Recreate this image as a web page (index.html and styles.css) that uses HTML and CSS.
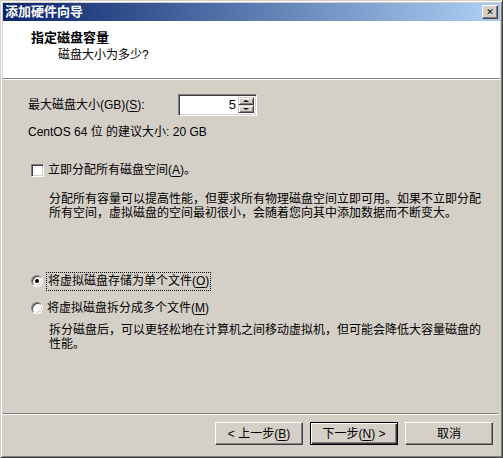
FILE: index.html
```html
<!DOCTYPE html>
<html lang="zh-CN">
<head>
    <meta charset="UTF-8">
    <title>添加硬件向导</title>
    <link rel="stylesheet" href="styles.css">
</head>
<body>
    <div class="window">
        <!-- Title bar -->
        <div class="titlebar">
            <span class="title">添加硬件向导</span>
            <span class="caption-btn">✕</span>
        </div>

        <!-- Header -->
        <div class="header">
            <div class="heading">指定磁盘容量</div>
            <div class="subheading">磁盘大小为多少?</div>
        </div>

        <!-- Body -->
        <div class="content">
            <div class="size-row">
                <label class="size-label" for="size">最大磁盘大小(GB)(<u>S</u>):</label>
                <div class="spinner">
                    <input id="size" class="spinner-input" type="text" value="5">
                    <div class="spin-buttons">
                        <span class="spin up"><i></i></span>
                        <span class="spin down"><i></i></span>
                    </div>
                </div>
            </div>
            <div class="hint">CentOS 64 位 的建议大小: 20 GB</div>

            <label class="option option-check">
                <span class="checkbox"></span>
                <span>立即分配所有磁盘空间(<u>A</u>)。</span>
            </label>
            <p class="desc desc-alloc">分配所有容量可以提高性能，但要求所有物理磁盘空间立即可用。如果不立即分配所有空间，虚拟磁盘的空间最初很小，会随着您向其中添加数据而不断变大。</p>

            <label class="option option-single">
                <span class="radio checked"></span>
                <span class="focus">将虚拟磁盘存储为单个文件(<u>O</u>)</span>
            </label>
            <label class="option option-split">
                <span class="radio"></span>
                <span>将虚拟磁盘拆分成多个文件(<u>M</u>)</span>
            </label>
            <p class="desc desc-split">拆分磁盘后，可以更轻松地在计算机之间移动虚拟机，但可能会降低大容量磁盘的性能。</p>
        </div>

        <!-- Footer -->
        <div class="footer">
            <button type="button" class="btn">&lt; 上一步(<u>B</u>)</button>
            <button type="button" class="btn btn-default">下一步(<u>N</u>) &gt;</button>
            <button type="button" class="btn">取消</button>
        </div>
    </div>
</body>
</html>
```

FILE: styles.css
```css
:root {
    --face: #d4d0c8;
    --shadow: #808080;
    --dark: #404040;
    --light: #ffffff;
    --text: #000000;
}

* {
    margin: 0;
    padding: 0;
    box-sizing: border-box;
}

body {
    font-family: "Liberation Sans", "Noto Sans CJK SC", sans-serif;
    font-size: 12px;
    line-height: 14px;
    color: var(--text);
    background: var(--face);
}

u {
    text-decoration: underline;
    text-underline-offset: 2px;
}

.window {
    width: 503px;
    height: 458px;
    display: flex;
    flex-direction: column;
    background: var(--face);
    border: 1px solid;
    border-color: var(--face) var(--dark) var(--dark) var(--face);
    box-shadow: inset 1px 1px var(--light), inset -1px -1px var(--shadow);
    padding: 2px;
}

/* Title bar */
.titlebar {
    height: 18px;
    flex: none;
    display: flex;
    align-items: center;
    gap: 8px;
    padding: 0 2px;
    background: linear-gradient(to right, #0a246a, #a6caf0 96%);
}

.title {
    flex: 1;
    color: #fff;
    font-weight: 700;
    font-size: 13px;
}

.caption-btn {
    width: 16px;
    height: 14px;
    flex: none;
    display: flex;
    align-items: center;
    justify-content: center;
    font-family: "DejaVu Sans", sans-serif;
    font-size: 9px;
    font-weight: 700;
    line-height: 1;
    color: #000;
    background: #d4d0c8;
    border-style: solid;
    border-width: 1px;
    border-color: #fff #404040 #404040 #fff;
    box-shadow: inset -1px -1px #808080;
}

/* Header */
.header {
    height: 59px;
    flex: none;
    background: #fff;
    padding: 10px 0 0 28px;
    border-bottom: 1px solid var(--light);
    box-shadow: inset 0 -1px var(--shadow);
}

.heading {
    font-weight: 700;
    font-size: 13px;
}

.subheading {
    margin-top: 3px;
    padding-left: 27px;
}

/* Body */
.content {
    flex: 1;
    padding: 14px 0 0 25px;
}

.size-row {
    display: flex;
    align-items: center;
    height: 22px;
}

.size-label {
    width: 150px;
}

.spinner {
    width: 79px;
    height: 22px;
    display: flex;
    background: #fff;
    border: 1px solid;
    border-color: var(--shadow) var(--light) var(--light) var(--shadow);
    box-shadow: inset 1px 1px var(--dark), inset -1px -1px var(--face);
    padding: 2px;
}

.spinner-input {
    flex: 1;
    min-width: 0;
    border: none;
    outline: none;
    background: transparent;
    font: inherit;
    font-size: 13px;
    text-align: right;
    padding-right: 2px;
}

.spin-buttons {
    width: 16px;
    display: flex;
    flex-direction: column;
}

.spin {
    flex: 1;
    display: flex;
    align-items: center;
    justify-content: center;
    background: var(--face);
    border: 1px solid;
    border-color: var(--face) var(--dark) var(--dark) var(--face);
    box-shadow: inset 1px 1px var(--light), inset -1px -1px var(--shadow);
}

.spin i {
    width: 0;
    height: 0;
    border-left: 3px solid transparent;
    border-right: 3px solid transparent;
}

.spin.up i {
    border-bottom: 2px solid #000;
}

.spin.down i {
    border-top: 2px solid #000;
}

.hint {
    margin-top: 9px;
}

.option {
    display: flex;
    align-items: center;
    gap: 4px;
    height: 18px;
    padding-left: 3px;
}

.option-check {
    margin-top: 22px;
}

.option-single {
    margin-top: 52px;
}

.option-split {
    margin-top: 9px;
}

.checkbox {
    width: 13px;
    height: 13px;
    flex: none;
    background: #fff;
    border: 1px solid;
    border-color: var(--shadow) var(--light) var(--light) var(--shadow);
    box-shadow: inset 1px 1px var(--dark), inset -1px -1px var(--face);
}

.radio {
    width: 12px;
    height: 12px;
    flex: none;
    position: relative;
    border-radius: 50%;
    background: #fff;
    border: 1px solid;
    border-color: var(--shadow) var(--light) var(--light) var(--shadow);
    box-shadow: inset 1px 1px var(--dark), inset -1px -1px var(--face);
}

.radio.checked::after {
    content: "";
    position: absolute;
    left: 3px;
    top: 3px;
    width: 4px;
    height: 4px;
    border-radius: 50%;
    background: #000;
}

.focus {
    outline: 1px dotted #000;
    outline-offset: 0;
    padding: 1px 1px 2px;
}

.desc {
    width: 440px;
    margin-left: 21px;
}

.desc-alloc {
    margin-top: 13px;
}

.desc-split {
    margin-top: 6px;
}

/* Footer */
.footer {
    height: 42px;
    flex: none;
    display: flex;
    justify-content: flex-end;
    align-items: flex-start;
    gap: 7px;
    padding: 8px 5px 0 0;
    border-top: 1px solid var(--shadow);
    box-shadow: inset 0 1px var(--light);
    margin-right: 2px;
}

.btn {
    width: 88px;
    height: 23px;
    font: inherit;
    color: #000;
    background: var(--face);
    border: 1px solid;
    border-color: var(--light) var(--dark) var(--dark) var(--light);
    box-shadow: inset -1px -1px var(--shadow);
}

.btn-default {
    border: 1px solid #000;
    box-shadow: inset 1px 1px var(--light), inset -1px -1px var(--dark), inset -2px -2px var(--shadow);
}
```
